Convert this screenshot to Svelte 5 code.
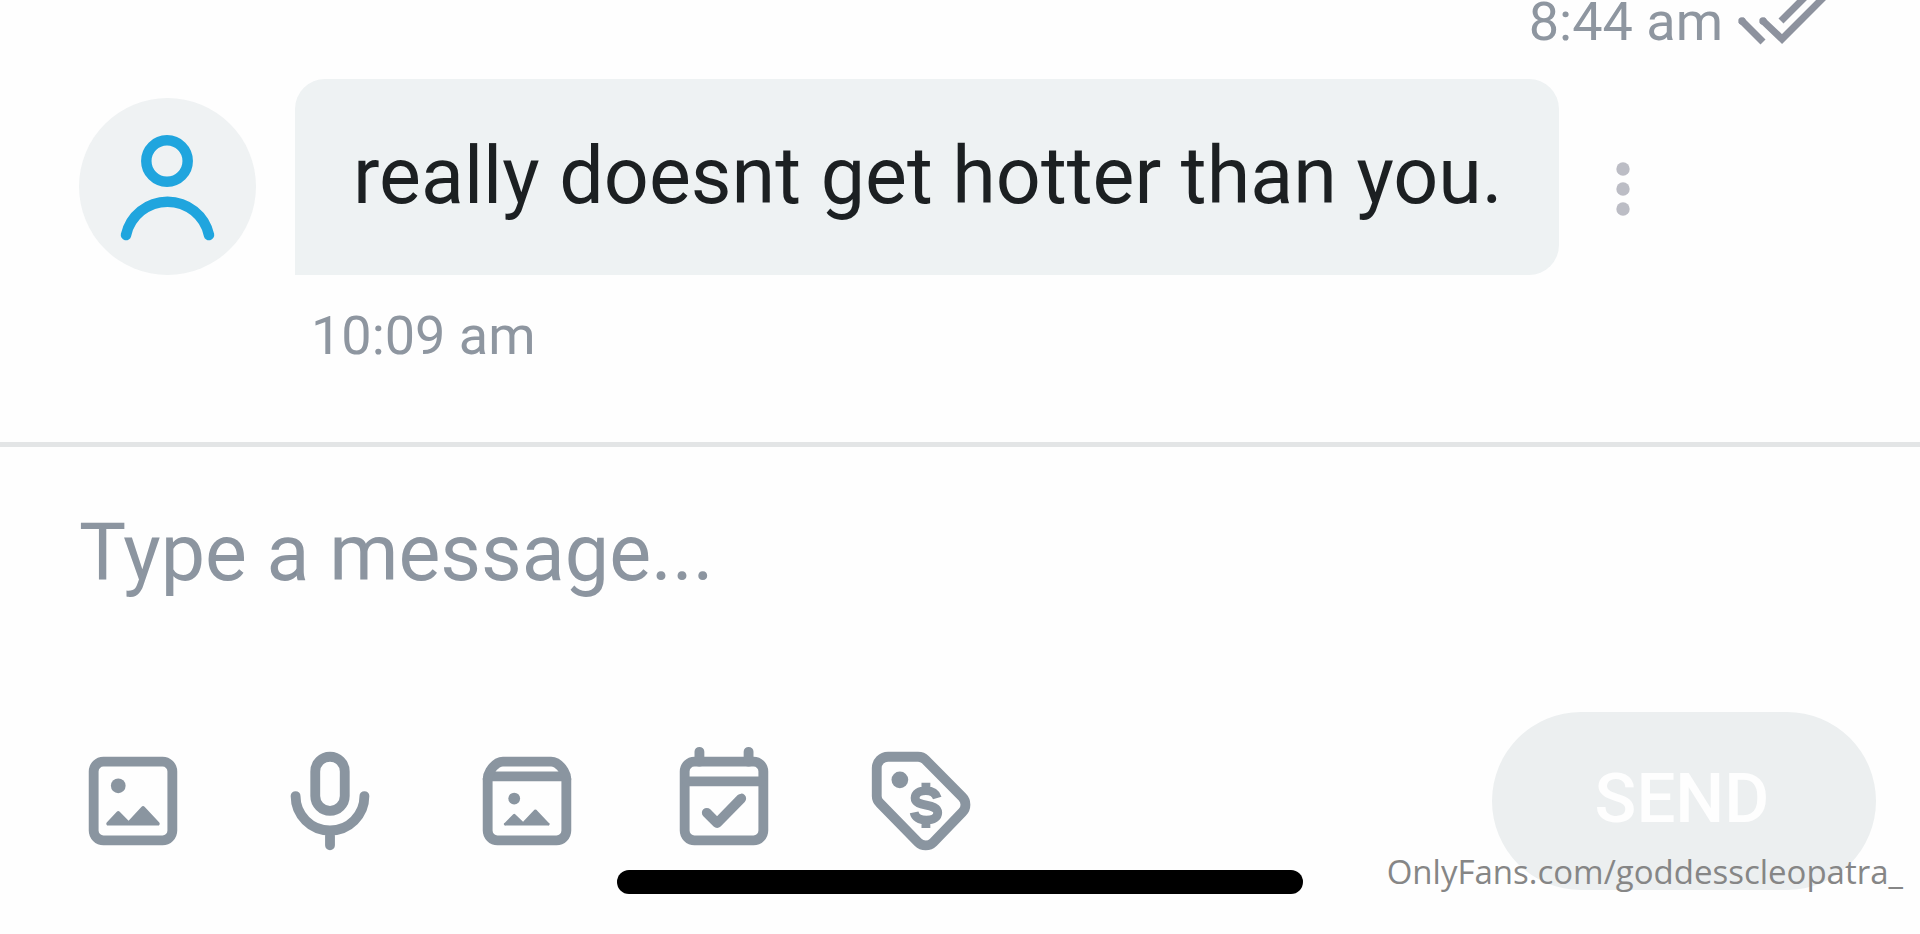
<script>
  let draft = '';

  const sent = { time: '8:44 am' };
  const received = {
    text: 'really doesnt get hotter than you.',
    time: '10:09 am'
  };
  const tools = [
    { id: 'image', label: 'Add image' },
    { id: 'voice', label: 'Record voice' },
    { id: 'vault', label: 'Open vault' },
    { id: 'schedule', label: 'Schedule message' },
    { id: 'price', label: 'Set price' }
  ];
</script>

<main>
  <section class="messages">
    <div class="status">
      <time>{sent.time}</time>
      <svg class="ticks" viewBox="0 0 90 44" aria-label="Read">
        <path d="M3 20L25 42" />
        <path d="M24 20L44 39L88 -5" />
        <path d="M43 21L67 -3" />
        <circle cx="4" cy="21" r="3.700" />
        <circle cx="25" cy="21" r="3.700" />
      </svg>
    </div>

    <div class="row">
      <svg class="avatar" viewBox="0 0 177 177" aria-label="User">
        <circle cx="88" cy="63" r="20.7" />
        <path d="M47 137A42.5 42.5 0 0 1 130 137" />
      </svg>
      <p class="bubble">{received.text}</p>
      <button class="more" aria-label="More">
        <svg viewBox="0 0 14 54">
          <circle cx="7" cy="7" r="6.7" />
          <circle cx="7" cy="27" r="6.7" />
          <circle cx="7" cy="47" r="6.7" />
        </svg>
      </button>
    </div>
    <time class="received-time">{received.time}</time>
  </section>

  <form class="composer" on:submit|preventDefault>
    <textarea
      rows="1"
      placeholder="Type a message..."
      aria-label="Message"
      bind:value={draft}
    ></textarea>
    <div class="toolbar">
      <div class="tools">
        {#each tools as tool}
          <button type="button" class="tool" aria-label={tool.label}>
            <svg viewBox="0 0 24 24">
              {#if tool.id == 'image'}
                <rect x="4" y="4" width="16" height="16" rx="2" />
                <circle class="fill" cx="9" cy="8.9" r="1.5" />
                <path class="fill" d="M7 17a.4.4 0 0 1-.3-.7l2-2.1a.4.4 0 0 1 .6 0L11.1 16l2.6-2.8a.5.5 0 0 1 .7 0l2.9 3.1a.4.4 0 0 1-.3.7z" />
              {:else if tool.id == 'voice'}
                <rect x="9" y="3" width="6" height="11" rx="3" />
                <path d="M5 11a7 7 0 0 0 14 0M12 18v3" />
              {:else if tool.id == 'vault'}
                <path d="M4 7.5V18a2 2 0 0 0 2 2h12a2 2 0 0 0 2-2V7.5M4.5 7h15" />
                <path d="M4 7.5c0-.6.2-1.100.5-1.600.5-.8 1-1.300 1.500-1.600.4-.2.7-.3 1.100-.3h9.800c.4 0 .7.1 1.100.3.5.3 1 .8 1.500 1.600.3.5.5 1 .5 1.600" />
                <circle class="fill" cx="9.4" cy="11.5" r="1.2" />
                <path class="fill" d="M7.7 17a.3.3 0 0 1-.2-.6l1.7-1.7a.3.3 0 0 1 .4 0l1.6 1.5 2.3-2.4a.3.3 0 0 1 .4 0l2.5 2.6a.3.3 0 0 1-.2.6z" />
              {:else if tool.id == 'schedule'}
                <rect x="4" y="4" width="16" height="16" rx="2" />
                <path d="M7 2v2M17 2v2M4.5 8h15M8.5 14.4l2.1 2.1 4.9-5" />
              {:else}
                <path d="M5.3 3h6.1c.6 0 1.1.2 1.5.6l7.5 7.6a2.2 2.2 0 0 1 0 3.1l-5.9 6.1a2.2 2.2 0 0 1-3.1 0l-7.8-8a2 2 0 0 1-.6-1.5V5.3A2.3 2.3 0 0 1 5.3 3z" />
                <circle class="fill" cx="7.7" cy="7.7" r="1.7" />
                <path class="dollar" d="M15.3 11.4c-.3-1-1.100-1.500-2.300-1.500-1.300 0-2.200.6-2.200 1.500 0 2 4.600.9 4.600 3 0 .9-.9 1.500-2.300 1.500s-2.300-.6-2.500-1.600M13 8.300v1.500M13 16v1.500" />
              {/if}
            </svg>
          </button>
        {/each}
      </div>
      <button class="send" disabled={!draft}>SEND</button>
    </div>
  </form>

  <div class="home-bar"></div>
  <span class="watermark">OnlyFans.com/goddesscleopatra_</span>
</main>

<style>
  :global(body) {
    background: #fefefe;
  }
  main {
    position: relative;
    display: flex;
    flex-direction: column;
    min-height: 100vh;
    overflow: hidden;
    font-family: Roboto, sans-serif;
    color: #1c2022;
  }
  button {
    padding: 0;
    border: 0;
    background: none;
    font: inherit;
    cursor: pointer;
  }
  svg {
    display: block;
  }
  time {
    font-size: 54px;
    line-height: 44px;
    color: #8e96a0;
  }
  .messages {
    display: flex;
    flex-direction: column;
    padding: 0 80px 84px 79px;
  }
  .status {
    display: flex;
    justify-content: flex-end;
    gap: 15px;
    padding-right: 12px;
    margin-bottom: 35px;
  }
  .ticks {
    width: 90px;
    height: 44px;
    overflow: visible;
    fill: none;
    stroke: #8d929e;
    stroke-width: 7px;
  }
  .ticks circle {
    fill: #8d929e;
    stroke: none;
  }
  .row {
    display: flex;
    align-items: flex-end;
  }
  .avatar {
    flex: none;
    width: 177px;
    height: 177px;
    margin-right: 39px;
    border-radius: 50%;
    background: #eff2f3;
    fill: none;
    stroke: #20a5de;
    stroke-width: 10.5px;
    stroke-linecap: round;
  }
  .bubble {
    margin: 0;
    padding: 51px 56px 53px 58px;
    border-radius: 30px 30px 30px 0;
    background: #eef2f3;
    font-size: 79px;
    line-height: 92px;
  }
  .more {
    align-self: center;
    margin: 24px 0 0 57px;
  }
  .more svg {
    width: 14px;
    height: 54px;
    fill: #bcbdc5;
  }
  .received-time {
    margin: 39px 0 0 232px;
  }
  .composer {
    flex: 1;
    padding: 60px 44px 44px 74px;
    border-top: 5px solid #e3e5e6;
  }
  textarea {
    display: block;
    box-sizing: border-box;
    width: 100%;
    height: 92px;
    margin-bottom: 113px;
    padding: 0 5px;
    border: 0;
    outline: 0;
    resize: none;
    overflow: hidden;
    background: none;
    font-family: inherit;
    font-size: 79px;
    line-height: 92px;
    color: inherit;
  }
  textarea::placeholder {
    color: #8c95a0;
    opacity: 1;
  }
  .toolbar {
    display: flex;
    justify-content: space-between;
    align-items: center;
  }
  .tools {
    display: flex;
    gap: 79px;
  }
  .tool svg {
    width: 118px;
    height: 118px;
    fill: none;
    stroke: #8a95a0;
    stroke-width: 2px;
    stroke-linecap: round;
    stroke-linejoin: round;
  }
  .tool .fill {
    fill: #8a95a0;
    stroke: none;
  }
  .tool .dollar {
    stroke-width: 1.8px;
    stroke-linecap: butt;
  }
  .send {
    width: 384px;
    height: 178px;
    padding: 0 4px 6px 0;
    border-radius: 89px;
    background: #eceff0;
    font-size: 69px;
    font-weight: 500;
    color: #fefefe;
  }
  .home-bar {
    position: absolute;
    bottom: 40px;
    left: 50%;
    width: 686px;
    height: 24px;
    border-radius: 12px;
    background: #000;
    transform: translateX(-50%);
  }
  .watermark {
    position: absolute;
    right: 17px;
    bottom: 40px;
    font-family: "Open Sans", sans-serif;
    font-size: 33px;
    line-height: 44px;
    color: #868686;
  }
</style>
